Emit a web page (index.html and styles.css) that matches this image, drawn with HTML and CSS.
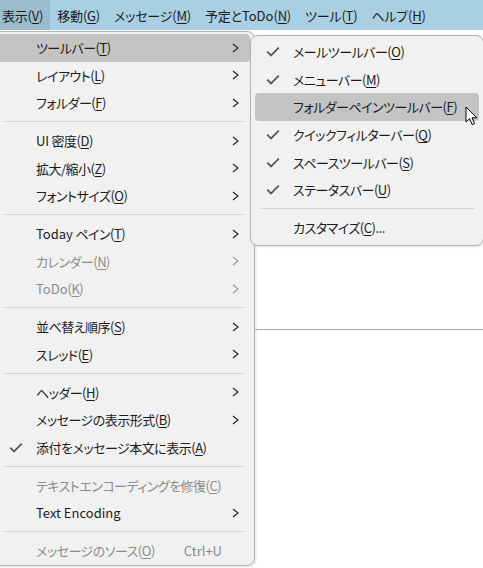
FILE: index.html
```html
<!DOCTYPE html>
<html lang="ja">
<head>
<meta charset="utf-8">
<title>表示メニュー</title>
<link rel="stylesheet" href="styles.css">
</head>
<body>
<div class="menubar">
  <span class="mb-item active">表示(<u>V</u>)</span>
  <span class="mb-item">移動(<u>G</u>)</span>
  <span class="mb-item">メッセージ(<u>M</u>)</span>
  <span class="mb-item">予定と<span class="latin">ToDo</span>(<u>N</u>)</span>
  <span class="mb-item">ツール(<u>T</u>)</span>
  <span class="mb-item">ヘルプ(<u>H</u>)</span>
</div>
<div class="workspace">
  <div class="pane-line"></div>
</div>

<div class="menu main-menu">
  <div class="item hover"><span class="chk"></span><span class="label">ツールバー(<u>T</u>)</span><span class="sc"></span><span class="arr"><svg width="7" height="10" viewBox="0 0 7 10"><path d="M1 1 L6 5 L1 9"/></svg></span></div>
  <div class="item"><span class="chk"></span><span class="label">レイアウト(<u>L</u>)</span><span class="sc"></span><span class="arr"><svg width="7" height="10" viewBox="0 0 7 10"><path d="M1 1 L6 5 L1 9"/></svg></span></div>
  <div class="item"><span class="chk"></span><span class="label">フォルダー(<u>F</u>)</span><span class="sc"></span><span class="arr"><svg width="7" height="10" viewBox="0 0 7 10"><path d="M1 1 L6 5 L1 9"/></svg></span></div>
  <div class="sep"></div>
  <div class="item"><span class="chk"></span><span class="label"><span class="latin">UI</span> 密度(<u>D</u>)</span><span class="sc"></span><span class="arr"><svg width="7" height="10" viewBox="0 0 7 10"><path d="M1 1 L6 5 L1 9"/></svg></span></div>
  <div class="item"><span class="chk"></span><span class="label">拡大/縮小(<u>Z</u>)</span><span class="sc"></span><span class="arr"><svg width="7" height="10" viewBox="0 0 7 10"><path d="M1 1 L6 5 L1 9"/></svg></span></div>
  <div class="item"><span class="chk"></span><span class="label">フォントサイズ(<u>O</u>)</span><span class="sc"></span><span class="arr"><svg width="7" height="10" viewBox="0 0 7 10"><path d="M1 1 L6 5 L1 9"/></svg></span></div>
  <div class="sep"></div>
  <div class="item"><span class="chk"></span><span class="label"><span class="latin">Today</span> ペイン(<u>T</u>)</span><span class="sc"></span><span class="arr"><svg width="7" height="10" viewBox="0 0 7 10"><path d="M1 1 L6 5 L1 9"/></svg></span></div>
  <div class="item disabled"><span class="chk"></span><span class="label">カレンダー(<u>N</u>)</span><span class="sc"></span><span class="arr"><svg width="7" height="10" viewBox="0 0 7 10"><path d="M1 1 L6 5 L1 9"/></svg></span></div>
  <div class="item disabled"><span class="chk"></span><span class="label"><span class="latin">ToDo</span>(<u>K</u>)</span><span class="sc"></span><span class="arr"><svg width="7" height="10" viewBox="0 0 7 10"><path d="M1 1 L6 5 L1 9"/></svg></span></div>
  <div class="sep"></div>
  <div class="item"><span class="chk"></span><span class="label">並べ替え順序(<u>S</u>)</span><span class="sc"></span><span class="arr"><svg width="7" height="10" viewBox="0 0 7 10"><path d="M1 1 L6 5 L1 9"/></svg></span></div>
  <div class="item"><span class="chk"></span><span class="label">スレッド(<u>E</u>)</span><span class="sc"></span><span class="arr"><svg width="7" height="10" viewBox="0 0 7 10"><path d="M1 1 L6 5 L1 9"/></svg></span></div>
  <div class="sep"></div>
  <div class="item"><span class="chk"></span><span class="label">ヘッダー(<u>H</u>)</span><span class="sc"></span><span class="arr"><svg width="7" height="10" viewBox="0 0 7 10"><path d="M1 1 L6 5 L1 9"/></svg></span></div>
  <div class="item"><span class="chk"></span><span class="label">メッセージの表示形式(<u>B</u>)</span><span class="sc"></span><span class="arr"><svg width="7" height="10" viewBox="0 0 7 10"><path d="M1 1 L6 5 L1 9"/></svg></span></div>
  <div class="item"><span class="chk"><svg width="14" height="11" viewBox="0 0 14 11"><path d="M1.2 5.6 L5 9.4 L12.8 1.6"/></svg></span><span class="label">添付をメッセージ本文に表示(<u>A</u>)</span><span class="sc"></span><span class="arr"></span></div>
  <div class="sep"></div>
  <div class="item disabled"><span class="chk"></span><span class="label">テキストエンコーディングを修復(<u>C</u>)</span><span class="sc"></span><span class="arr"></span></div>
  <div class="item"><span class="chk"></span><span class="label"><span class="latin">Text Encoding</span></span><span class="sc"></span><span class="arr"><svg width="7" height="10" viewBox="0 0 7 10"><path d="M1 1 L6 5 L1 9"/></svg></span></div>
  <div class="sep"></div>
  <div class="item disabled"><span class="chk"></span><span class="label">メッセージのソース(<u>O</u>)</span><span class="sc latin">Ctrl+U</span><span class="arr"></span></div>
</div>

<div class="menu sub-menu">
  <div class="item"><span class="chk"><svg width="14" height="11" viewBox="0 0 14 11"><path d="M1.2 5.6 L5 9.4 L12.8 1.6"/></svg></span><span class="label">メールツールバー(<u>O</u>)</span></div>
  <div class="item"><span class="chk"><svg width="14" height="11" viewBox="0 0 14 11"><path d="M1.2 5.6 L5 9.4 L12.8 1.6"/></svg></span><span class="label">メニューバー(<u>M</u>)</span></div>
  <div class="item hover"><span class="chk"></span><span class="label">フォルダーペインツールバー(<u>F</u>)</span></div>
  <div class="item"><span class="chk"><svg width="14" height="11" viewBox="0 0 14 11"><path d="M1.2 5.6 L5 9.4 L12.8 1.6"/></svg></span><span class="label">クイックフィルターバー(<u>Q</u>)</span></div>
  <div class="item"><span class="chk"><svg width="14" height="11" viewBox="0 0 14 11"><path d="M1.2 5.6 L5 9.4 L12.8 1.6"/></svg></span><span class="label">スペースツールバー(<u>S</u>)</span></div>
  <div class="item"><span class="chk"><svg width="14" height="11" viewBox="0 0 14 11"><path d="M1.2 5.6 L5 9.4 L12.8 1.6"/></svg></span><span class="label">ステータスバー(<u>U</u>)</span></div>
  <div class="sep"></div>
  <div class="item"><span class="chk"></span><span class="label">カスタマイズ(<u>C</u>)...</span></div>
</div>

<svg class="cursor" width="14" height="21" viewBox="0 0 14 21"><path d="M1 1 L1 16 L4.6 12.6 L7.2 18.6 L9.6 17.6 L7 11.8 L11.8 11.8 Z"/></svg>
</body>
</html>
```

FILE: styles.css
```css
html, body {
  margin: 0;
  padding: 0;
}
body {
  width: 483px;
  height: 568px;
  overflow: hidden;
  position: relative;
  background: #ffffff;
  font-family: "Noto Sans CJK JP", sans-serif;
  font-feature-settings: "palt";
  font-size: 13px;
  color: #1b1b1b;
}
u {
  text-decoration: underline;
  text-underline-offset: 2px;
  text-decoration-thickness: 1px;
}
.latin {
  letter-spacing: 0;
}

.menubar {
  display: flex;
  height: 30px;
  align-items: stretch;
  background: #a9cfe3;
  margin-left: -5px;
}
.mb-item {
  display: flex;
  align-items: center;
  padding: 0 7px;
  line-height: 1;
  letter-spacing: -0.2px;
}
.mb-item.active {
  background: #9bbccd;
}

.workspace {
  height: 538px;
}
.pane-line {
  margin-top: 299px;
  border-top: 1px solid #a9b0c7;
}

.menu {
  position: absolute;
  box-sizing: border-box;
  background: #f1f1f1;
  border: 1px solid #b4b4b4;
  border-radius: 8px;
  box-shadow: 1px 1px 3px rgba(0, 0, 0, 0.12);
}
.main-menu {
  left: -7px;
  top: 31px;
  width: 262px;
  padding: 2px 4px 1px 4px;
}
.sub-menu {
  left: 250px;
  top: 35px;
  width: 234px;
  padding: 2px 4px 4px 4px;
}

.item {
  display: grid;
  grid-template-columns: 38px 1fr auto 28px;
  align-items: center;
  height: 27.6px;
  border-radius: 4px;
  white-space: nowrap;
}
.sub-menu .item {
  grid-template-columns: 38px 1fr;
}
.item.hover {
  background: #c4c4c4;
}
.item.disabled {
  color: #8b8b8b;
}
.chk {
  display: flex;
  align-items: center;
  padding-left: 11px;
}
.chk svg path {
  fill: none;
  stroke: #585858;
  stroke-width: 1.8;
}
.label {
  line-height: 1;
  letter-spacing: -0.5px;
}
.sc {
  line-height: 1;
  text-align: right;
}
.arr {
  display: flex;
  align-items: center;
  padding-left: 10px;
}
.arr svg path {
  fill: none;
  stroke: #222222;
  stroke-width: 1.15;
}
.item.disabled .arr svg path {
  stroke: #9a9a9a;
}
.sep {
  height: 1px;
  background: #d4d4d4;
  margin: 4.6px 5px;
}

.cursor {
  position: absolute;
  left: 465px;
  top: 106px;
}
.cursor path {
  fill: #ffffff;
  stroke: #000000;
  stroke-width: 1;
  stroke-linejoin: miter;
}
```
